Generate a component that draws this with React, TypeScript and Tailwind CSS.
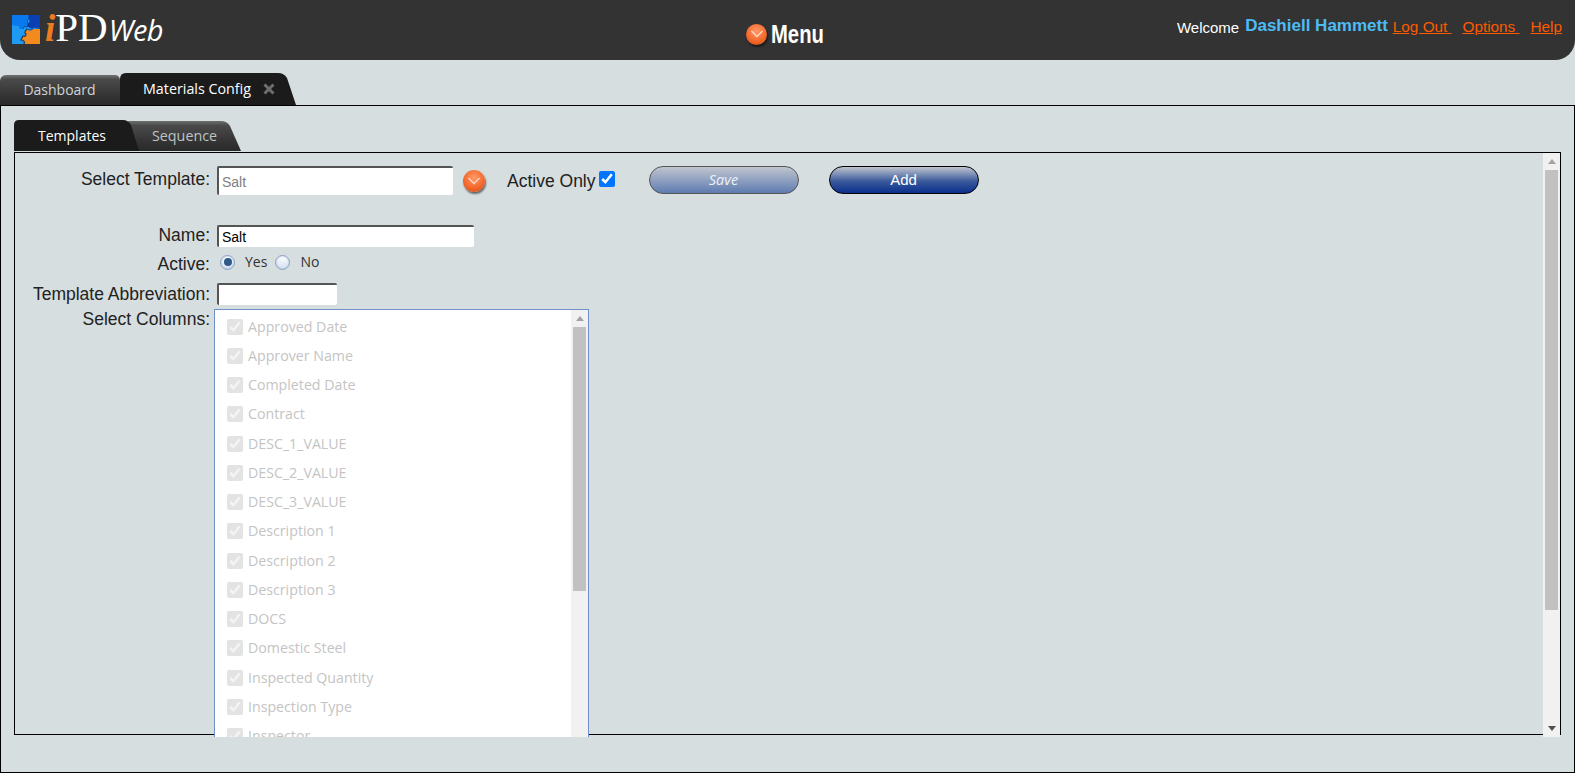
import React from "react";

const columns = [
  "Approved Date",
  "Approver Name",
  "Completed Date",
  "Contract",
  "DESC_1_VALUE",
  "DESC_2_VALUE",
  "DESC_3_VALUE",
  "Description 1",
  "Description 2",
  "Description 3",
  "DOCS",
  "Domestic Steel",
  "Inspected Quantity",
  "Inspection Type",
  "Inspector",
];

function Logo() {
  return (
    <svg width="28" height="29" viewBox="0 0 28 29" className="shrink-0">
      <rect x="0" y="0" width="28" height="29" fill="#1f9af2" />
      <path d="M0 0h17v4c-2 1-2 4 0 5l-2 3c-2-1-4 0-4 2H7c1-2-1-4-3-3l-4-1z" fill="#0a78ee" />
      <path d="M17 0h11v13l-6-1c-1 2-4 2-5 0l-2 0c1-2 0-3 0-3 3-1 3-4 2-5z" fill="#0b3fb4" />
      <path d="M15 14c1 2 4 2 6 0h7v15H12c1-2 0-4-3-4l2-4c2 1 3 0 3-2 -2-1-1-3 1-5z" fill="#f28a1e" />
      <path d="M17 0v4c-2 1-2 4 0 5l-2 3c-2-1-4 0-4 2" fill="none" stroke="#123a7a" strokeWidth="0.8" />
      <path d="M15 14c-2 2-3 4-1 5 0 2-1 3-3 2l-2 4c3 0 4 2 3 4" fill="none" stroke="#24384c" strokeWidth="1.2" />
      <path d="M15 13.5c2 2 5 2 7-1l6 1" fill="none" stroke="#103080" strokeWidth="0.8" />
    </svg>
  );
}

function OrangeBall({ className }: { className?: string }) {
  return (
    <span
      className={
        "relative inline-flex shrink-0 items-center justify-center rounded-full bg-[radial-gradient(circle_at_50%_35%,#ff9a66,#f2662a_60%,#c94a10)] shadow-[1px_2px_2px_rgba(0,0,0,0.55)] " +
        (className ?? "")
      }
    >
      <svg width="14" height="8" viewBox="0 0 14 8" fill="none">
        <path d="M1.5 1l5.5 5.5L12.5 1" stroke="#ffd9c4" strokeWidth="1.4" />
      </svg>
    </span>
  );
}

function Radio({ checked }: { checked?: boolean }) {
  return (
    <span className="flex h-[15px] w-[15px] shrink-0 items-center justify-center rounded-full border-[1.5px] border-[#8ba2c4] bg-[linear-gradient(#ffffff,#d5e0f0)] shadow-[inset_0_0_2px_#9db4d4]">
      {checked && <span className="h-[8px] w-[8px] rounded-full bg-[#2f5a88]" />}
    </span>
  );
}

function ScrollBar({ thumbH }: { thumbH: number }) {
  return (
    <div className="flex h-full w-[17px] shrink-0 flex-col bg-[#f1f1f1]">
      <div className="flex h-[17px] shrink-0 items-center justify-center">
        <svg width="8" height="5" viewBox="0 0 8 5">
          <path d="M4 0l4 5H0z" fill="#a3a3a3" />
        </svg>
      </div>
      <div className="mx-[2px] shrink-0 bg-[#c1c1c1]" style={{ height: thumbH }} />
      <div className="flex-1" />
      <div className="flex h-[17px] shrink-0 items-center justify-center">
        <svg width="8" height="5" viewBox="0 0 8 5">
          <path d="M0 0h8L4 5z" fill="#505050" />
        </svg>
      </div>
    </div>
  );
}

const label =
  "w-[195px] shrink-0 text-right text-[17.5px] leading-[18px] text-[#222]";
const textInput =
  "rounded-[2px] border-l-2 border-t-2 border-l-[#555] border-t-[#555] bg-white pl-[3px] text-[14px] outline-none";

export default function App() {
  return (
    <div className="flex h-[773px] w-[1575px] flex-col overflow-hidden bg-[#d6dee0] font-['Liberation_Sans',Arial,sans-serif]">
      <header className="flex h-[60px] shrink-0 items-start justify-between rounded-b-[20px] bg-[#333333]">
        <div className="flex w-[400px] items-center pl-[12px] pt-[13px]">
          <Logo />
          <span className="ml-[5px] flex -translate-y-[1px] items-baseline leading-[30px] text-white">
            <span className="font-['Liberation_Serif',serif] text-[37px] font-bold italic text-[#ee7b22]">i</span>
            <span className="font-['Liberation_Serif',serif] text-[41px]">PD</span>
            <span className="ml-[1px] font-['Open_Sans',sans-serif] text-[29px] italic tracking-[-0.5px]">Web</span>
          </span>
        </div>
        <div className="ml-[-6px] flex items-center pt-[20px]">
          <OrangeBall className="h-[21px] w-[21px]" />
          <span className="ml-[4px] w-[53px] origin-left scale-x-[0.81] whitespace-nowrap text-[25px] font-bold leading-[28px] text-white">
            Menu
          </span>
        </div>
        <div className="flex items-baseline pr-[13px] pt-[17px] text-[15.3px] leading-[20px]">
          <span className="relative top-[1px] mr-[6px] text-[15px] text-white">Welcome</span>
          <span className="relative top-[-1px] mr-[5px] text-[17px] font-bold text-[#4dbcf5]">Dashiell Hammett</span>
          <a className="mr-[11px] text-[#ff5a00] underline">Log Out&nbsp;</a>
          <a className="mr-[11px] text-[#ff5a00] underline">Options&nbsp;</a>
          <a className="text-[#ff5a00] underline">Help</a>
        </div>
      </header>

      <div className="mt-[13px] flex h-[32px] shrink-0 items-end font-['Open_Sans',sans-serif] text-[14.3px]">
        <div className="flex h-[30px] w-[120px] items-center justify-center rounded-tl-[6px] rounded-tr-[5px] bg-[linear-gradient(#707070,#4a4a4a_15%,#333_70%,#2a2a2a)] pb-[1px] pr-[1px] text-[14px] text-[#cfd4d6]">
          Dashboard
        </div>
        <div className="flex h-[32px] w-[176px] items-center bg-[#1b1b1b] pb-[1px] pl-[23px] text-white [clip-path:path('M0,32L0,6Q0,0,6,0L158,0Q164,0,167,5L176,32Z')]">
          Materials Config
          <svg width="12" height="12" viewBox="0 0 12 12" className="ml-[12px]">
            <path d="M1.5 1.5l9 9M10.5 1.5l-9 9" stroke="#6e6e6e" strokeWidth="3" />
          </svg>
        </div>
      </div>

      <main className="flex h-[668px] shrink-0 flex-col border border-black px-[13px] pt-[14px]">
        <div className="flex h-[31px] shrink-0 items-end font-['Open_Sans',sans-serif] text-[14.3px]">
          <div className="z-10 flex h-[31px] w-[125px] items-center bg-[#1b1b1b] pl-[24px] text-[14px] text-white [clip-path:path('M0,31L0,5Q0,0,5,0L109,0Q114,0,117,5L125,31Z')]">
            Templates
          </div>
          <div className="ml-[-11px] flex h-[30px] w-[113px] items-center bg-[linear-gradient(#6e6e6e,#4a4a4a_15%,#333_70%,#2a2a2a)] pb-[1px] pl-[24px] text-[#bfc4c6] [clip-path:path('M0,0L93,0Q99,0,102,5L113,30L9,30Z')]">
            Sequence
          </div>
        </div>

        <section className="mt-[1px] flex h-[583px] w-[1547px] shrink-0 border border-black">
          <div className="-mb-[3px] h-[584px] min-w-0 flex-1 overflow-hidden">
            <div className="flex items-center pt-[13px]">
              <span className={label + " -translate-y-[2px]"}>Select Template:</span>
              <input
                readOnly
                value="Salt"
                className={textInput + " ml-[7px] h-[29px] w-[236px] text-[#808080]"}
              />
              <OrangeBall className="ml-[10px] h-[22px] w-[22px]" />
              <span className="ml-[22px] text-[17.5px] leading-[20px] text-[#222]">Active Only</span>
              <input type="checkbox" defaultChecked className="ml-[3px] h-4 w-4 -translate-y-[2px]" />
              <button className="ml-[34px] flex h-[28px] w-[150px] -translate-y-[1px] items-center justify-center rounded-[14px] border border-[#555] bg-[linear-gradient(#c0c5cf,#5e7cb0)] font-['Open_Sans',sans-serif] text-[14.5px] italic text-[#eef1f6]">
                Save
              </button>
              <button className="ml-[30px] flex h-[28px] w-[150px] -translate-y-[1px] items-center justify-center rounded-[14px] border border-black bg-[linear-gradient(#c0c5cf,#3a5a9c_55%,#0a2f8c)] pt-[1px] text-[15px] text-white">
                Add
              </button>
            </div>

            <div className="mt-[30px] flex items-center">
              <span className={label + " -translate-y-[1px]"}>Name:</span>
              <input readOnly value="Salt" className={textInput + " ml-[7px] h-[22px] w-[257px] text-black"} />
            </div>
            <div className="mt-[8px] flex items-center">
              <span className={label}>Active:</span>
              <span className="ml-[10px] flex -translate-y-[2px] items-center font-['Open_Sans',sans-serif] text-[14px] leading-[18px] text-[#333]">
                <Radio checked />
                <span className="ml-[10px]">Yes</span>
                <span className="ml-[8px]"><Radio /></span>
                <span className="ml-[10px]">No</span>
              </span>
            </div>
            <div className="mt-[10px] flex items-center">
              <span className={label}>Template Abbreviation:</span>
              <input readOnly value="" className={textInput + " ml-[7px] h-[22px] w-[120px]"} />
            </div>
            <div className="mt-[4px] flex items-start">
              <span className={label + " pt-[1px]"}>Select Columns:</span>
              <div className="ml-[4px] h-[430px] w-[375px] overflow-hidden border-x border-t border-[#6f90c8] bg-white">
                <div className="flex h-[450px]">
                  <div className="min-w-0 flex-1 pl-[12px] pt-[2px] font-['Open_Sans',sans-serif] text-[14.2px] text-[#c4c4c4]">
                    {columns.map((c) => (
                      <label key={c} className="flex h-[29.25px] items-center">
                        <input type="checkbox" checked disabled readOnly className="m-0 h-4 w-4 shrink-0 opacity-60" />
                        <span className="ml-[5px] leading-[18px]">{c}</span>
                      </label>
                    ))}
                  </div>
                  <ScrollBar thumbH={264} />
                </div>
              </div>
            </div>
          </div>
          <div className="-mb-[3px] h-[584px]">
            <ScrollBar thumbH={440} />
          </div>
        </section>
      </main>
    </div>
  );
}
